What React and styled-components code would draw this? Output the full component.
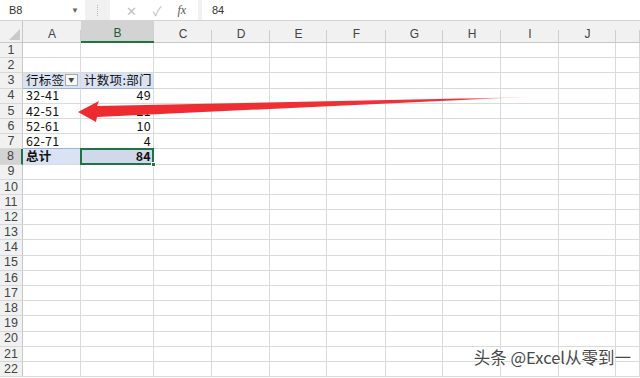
import React from "react";
import styled, { createGlobalStyle } from "styled-components";

const GlobalStyle = createGlobalStyle`
  html, body {
    margin: 0;
    padding: 0;
    background: #ffffff;
  }
  body {
    width: 640px;
    height: 378px;
    overflow: hidden;
    font-family: "Noto Sans CJK SC", "Noto Sans", sans-serif;
  }
`;

const Window = styled.div`
  position: relative;
  width: 640px;
  height: 378px;
  overflow: hidden;
  background: #ffffff;
`;

const TopBar = styled.div`
  display: flex;
  height: 20px;
  background: #f1f1f1;
  border-bottom: 1px solid #d4d4d4;
`;

const NameBox = styled.div`
  width: 85px;
  display: flex;
  align-items: center;
  justify-content: space-between;
  padding: 0 6px 0 9px;
  box-sizing: border-box;
  background: #ffffff;
  font-family: "Liberation Sans", Arial, sans-serif;
  font-size: 11px;
  color: #333;
`;

const Caret = styled.span`
  font-size: 8px;
  color: #666;
`;

const Grip = styled.div`
  width: 25px;
  display: flex;
  justify-content: center;
  align-items: center;
  &::before {
    content: "";
    width: 1px;
    height: 11px;
    border-left: 1px dotted #b8b8b8;
  }
`;

const FxBox = styled.div`
  width: 88px;
  display: flex;
  align-items: center;
  justify-content: space-around;
  padding: 0 4px 0 8px;
  box-sizing: border-box;
  background: #ffffff;
  color: #c0c0c0;
  font-size: 13px;
`;

const FxLabel = styled.span`
  font-family: "Liberation Serif", serif;
  font-style: italic;
  font-size: 12px;
  color: #555;
`;

const FormulaInput = styled.div`
  flex: 1;
  margin-left: 4px;
  display: flex;
  align-items: center;
  padding-left: 10px;
  background: #ffffff;
  font-family: "Liberation Sans", Arial, sans-serif;
  font-size: 11px;
  color: #333;
`;

const Sheet = styled.div`
  display: grid;
  grid-template-columns: 23px 58px 73px 58px 58px 57px 59px 57px 58px 58px 57px 1fr;
  grid-template-rows: 22px;
  grid-auto-rows: 15.2px;
  background: #ffffff;
`;

const Corner = styled.div`
  background: #f1f1f1;
  border-right: 1px solid #c8c8c8;
  border-bottom: 1px solid #c8c8c8;
  display: flex;
  align-items: flex-end;
  justify-content: flex-end;
  padding: 0 2px 2px 0;
  box-sizing: border-box;
`;

const CornerTriangle = styled.div`
  width: 0;
  height: 0;
  border-left: 11px solid transparent;
  border-bottom: 11px solid #c9c9c9;
`;

const ColHead = styled.div`
  position: relative;
  display: flex;
  align-items: flex-end;
  justify-content: center;
  padding-bottom: 1px;
  box-sizing: border-box;
  background: ${(p) => (p.$active ? "#d3d3d3" : "#f1f1f1")};
  border-bottom: ${(p) => (p.$active ? "2px solid #217346" : "1px solid #c8c8c8")};
  font-family: "Liberation Sans", Arial, sans-serif;
  font-size: 12px;
  color: ${(p) => (p.$active ? "#1e5e3a" : "#444")};

  &::after {
    content: "";
    position: absolute;
    right: 0;
    bottom: 0;
    width: 1px;
    height: 12px;
    background: #cfcfcf;
  }
`;

const RowHead = styled.div`
  display: flex;
  align-items: center;
  justify-content: center;
  box-sizing: border-box;
  background: ${(p) => (p.$active ? "#d3d3d3" : "#f1f1f1")};
  border-right: ${(p) => (p.$active ? "2px solid #217346" : "1px solid #c8c8c8")};
  border-bottom: 1px solid #d8d8d8;
  font-family: "Liberation Sans", Arial, sans-serif;
  font-size: 12.5px;
  color: #444;
  line-height: 1;
`;

const Cell = styled.div`
  position: relative;
  display: flex;
  align-items: center;
  justify-content: ${(p) => (p.$right ? "flex-end" : "space-between")};
  padding: 0 2px 0 3px;
  box-sizing: border-box;
  border-right: 1px solid #dadada;
  border-bottom: 1px solid ${(p) => (p.$band === "head" ? "#9bb3dc" : "#dadada")};
  border-top: ${(p) => (p.$band === "total" ? "1px solid #9bb3dc" : "none")};
  margin-top: ${(p) => (p.$band === "total" ? "-1px" : "0")};
  background: ${(p) =>
    p.$selected ? "#cfd9ea" : p.$band ? "#dae3f3" : "transparent"};
  font-size: 12.5px;
  font-weight: ${(p) => (p.$bold ? 700 : 400)};
  letter-spacing: 0.3px;
  color: #111;
  line-height: 1;
  white-space: nowrap;

  ${(p) =>
    p.$selected &&
    `
    &::after {
      content: "";
      position: absolute;
      left: -1px;
      top: -1px;
      right: -1px;
      bottom: -1px;
      border: 2px solid #217346;
      pointer-events: none;
    }
    &::before {
      content: "";
      position: absolute;
      right: -3px;
      bottom: -3px;
      width: 5px;
      height: 5px;
      background: #217346;
      border: 1px solid #fff;
      box-sizing: border-box;
      z-index: 2;
    }
  `}
`;

const FilterButton = styled.span`
  width: 11px;
  height: 10px;
  display: flex;
  align-items: center;
  justify-content: center;
  border: 1px solid #a9a9a9;
  background: #f7f7f7;
  font-size: 6px;
  color: #444;
`;

const Arrow = styled.svg`
  position: absolute;
  left: 0;
  top: 0;
  pointer-events: none;
`;

const Watermark = styled.div`
  position: absolute;
  right: 9px;
  bottom: 9px;
  font-size: 16.5px;
  color: #484848;
  text-shadow: -1px 0 #fff, 1px 0 #fff, 0 -1px #fff, 0 1px #fff, 1px 1px #fff, -1px -1px #fff;
`;

const COLS = ["A", "B", "C", "D", "E", "F", "G", "H", "I", "J", ""];

const pivot = {
  3: { a: "行标签", b: "计数项:部门", band: "head" },
  4: { a: "32-41", b: "49" },
  5: { a: "42-51", b: "21" },
  6: { a: "52-61", b: "10" },
  7: { a: "62-71", b: "4" },
  8: { a: "总计", b: "84", band: "total" },
};

const App = () => {
  const rows = Array.from({ length: 22 }, (_, i) => i + 1);

  return (
    <Window>
      <GlobalStyle />
      <TopBar>
        <NameBox>
          B8 <Caret>▼</Caret>
        </NameBox>
        <Grip />
        <FxBox>
          <span>✕</span>
          <span>✓</span>
          <FxLabel>fx</FxLabel>
        </FxBox>
        <FormulaInput>84</FormulaInput>
      </TopBar>

      <Sheet>
        <Corner>
          <CornerTriangle />
        </Corner>
        {COLS.map((c, i) => (
          <ColHead key={i} $active={c === "B"}>
            {c}
          </ColHead>
        ))}

        {rows.map((r) => {
          const p = pivot[r];
          return (
            <React.Fragment key={r}>
              <RowHead $active={r === 8}>{r}</RowHead>
              <Cell $band={p && p.band} $bold={r === 8}>
                {p && p.a}
                {r === 3 && <FilterButton>▼</FilterButton>}
              </Cell>
              <Cell
                $band={p && p.band}
                $right={p && r !== 3}
                $bold={r === 8}
                $selected={r === 8}
              >
                {p && p.b}
              </Cell>
              {COLS.slice(2).map((c, i) => (
                <Cell key={i} />
              ))}
            </React.Fragment>
          );
        })}
      </Sheet>

      <Arrow width="640" height="378" viewBox="0 0 640 378">
        <defs>
          <linearGradient id="tail" x1="0" y1="0" x2="1" y2="0">
            <stop offset="0" stopColor="#ee2a2f" />
            <stop offset="0.85" stopColor="#ee3338" />
            <stop offset="1" stopColor="#f6a0a6" stopOpacity="0.4" />
          </linearGradient>
        </defs>
        <polygon
          points="78,112 99,101 97,106 528,97 97,117 96,122"
          fill="url(#tail)"
        />
      </Arrow>

      <Watermark>头条 @Excel从零到一</Watermark>
    </Window>
  );
};

export default App;
